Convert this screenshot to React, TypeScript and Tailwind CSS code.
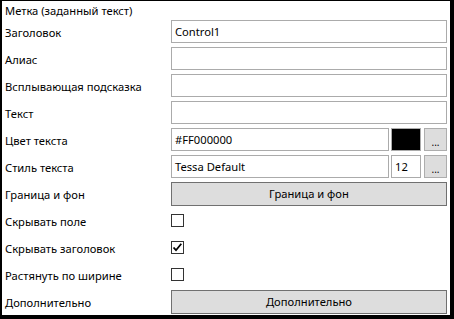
import React from "react";

const font = { fontFamily: '"Noto Sans", "Open Sans", sans-serif' };

function Row({ label, children }: { label: string; children?: React.ReactNode }) {
  return (
    <div className="flex h-[27px] items-center">
      <div className="w-[169px] shrink-0 pl-[3px] pt-[3px] text-[11.2px] leading-[16px] text-black whitespace-nowrap">{label}</div>
      <div className="flex flex-1 items-center pr-[3px]">{children}</div>
    </div>
  );
}

function TextBox({ value, className = "" }: { value?: string; className?: string }) {
  return (
    <div className={"flex h-[23px] items-center border border-[#ababab] bg-white px-[3px] text-[11.2px] leading-[16px] text-black " + className}>
      {value}
    </div>
  );
}

function DotsButton() {
  return (
    <div className="ml-[3px] flex h-[23px] w-[23px] shrink-0 items-end justify-center border border-[#adadad] bg-[#dddddd] pb-[3px] text-[10px] leading-[10px] text-black">
      ...
    </div>
  );
}

function CheckBox({ checked }: { checked?: boolean }) {
  return (
    <div className="flex h-[13px] w-[13px] items-center justify-center border border-[#333333] bg-white">
      {checked && (
        <svg width="11" height="11" viewBox="0 0 11 11">
          <path d="M1.5 5.5 L4 8.2 L9.3 1.8" fill="none" stroke="#000" strokeWidth="1.8" />
        </svg>
      )}
    </div>
  );
}

function WideButton({ label }: { label: string }) {
  return (
    <div className="flex h-[24px] flex-1 items-center justify-center border border-[#707070] bg-[#dddddd] text-[11.2px] leading-[16px] text-black">
      {label}
    </div>
  );
}

export default function App() {
  return (
    <div className="h-[319px] w-[454px] bg-black pb-[4px] pl-[2px] pr-[4px] pt-[1px]" style={font}>
      <div className="h-full w-full bg-white">
        <div className="h-[17px] pl-[3px] pt-[2px] text-[11.2px] leading-[16px] text-black">Метка (заданный текст)</div>
        <Row label="Заголовок">
          <TextBox value="Control1" className="flex-1" />
        </Row>
        <Row label="Алиас">
          <TextBox className="flex-1" />
        </Row>
        <Row label="Всплывающая подсказка">
          <TextBox className="flex-1" />
        </Row>
        <Row label="Текст">
          <TextBox className="flex-1" />
        </Row>
        <Row label="Цвет текста">
          <TextBox value="#FF000000" className="flex-1" />
          <div className="ml-[2px] h-[23px] w-[30px] shrink-0 border border-[#ababab] bg-black" />
          <DotsButton />
        </Row>
        <Row label="Стиль текста">
          <TextBox value="Tessa Default" className="flex-1" />
          <TextBox value="12" className="ml-[2px] w-[30px] shrink-0" />
          <DotsButton />
        </Row>
        <Row label="Граница и фон">
          <WideButton label="Граница и фон" />
        </Row>
        <Row label="Скрывать поле">
          <CheckBox />
        </Row>
        <Row label="Скрывать заголовок">
          <CheckBox checked />
        </Row>
        <Row label="Растянуть по ширине">
          <CheckBox />
        </Row>
        <Row label="Дополнительно">
          <WideButton label="Дополнительно" />
        </Row>
      </div>
    </div>
  );
}
